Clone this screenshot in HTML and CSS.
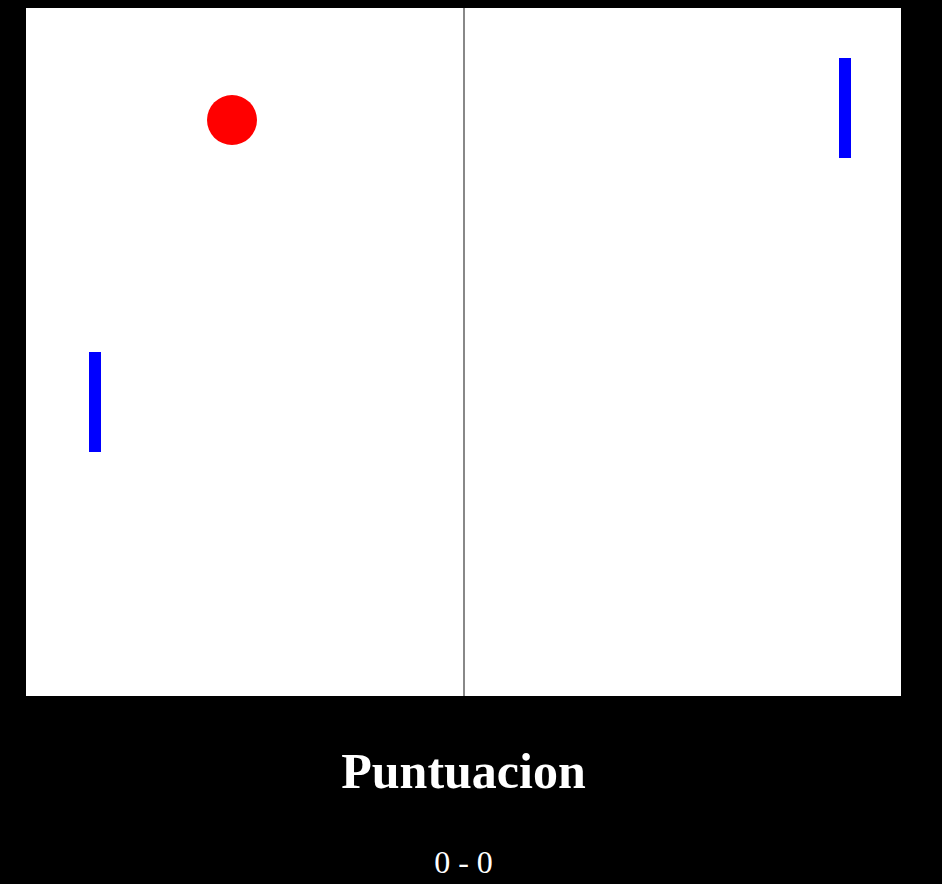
FILE: index.html
```html
<html>

<head>
    <link rel="stylesheet" href="styles.css">
</head>

<body>
<div class="game">
    <div class="field">
        <div class="net"></div>
        <div class="ball"></div>
        <div class="paddle paddle-left"></div>
        <div class="paddle paddle-right"></div>
    </div>
    <h1>Puntuacion</h1>
    <p class="score">0 - 0</p>
</div>
</body>

</html>
```

FILE: styles.css
```css
body {
    margin: 0;
    padding: 8px 0 0 26px;
    background: black;
    color: white;
    font-family: "Liberation Serif", "Times New Roman", serif;
}

.game {
    width: 875px;
}

.field {
    position: relative;
    height: 688px;
    background: white;
}

.net {
    position: absolute;
    left: 437px;
    top: 0;
    width: 2px;
    height: 100%;
    background: #888;
}

.ball {
    position: absolute;
    left: 181px;
    top: 87px;
    width: 50px;
    height: 50px;
    border-radius: 50%;
    background: red;
}

.paddle {
    position: absolute;
    width: 12.5px;
    height: 100px;
    background: blue;
}

.paddle-left {
    left: 62.5px;
    top: 344px;
}

.paddle-right {
    left: 812.5px;
    top: 50px;
}

h1 {
    margin: 46px 0 0;
    text-align: center;
    font-size: 50px;
    line-height: 58px;
}

.score {
    margin: 44px 0 0;
    text-align: center;
    font-size: 32px;
    line-height: 37px;
}
```
